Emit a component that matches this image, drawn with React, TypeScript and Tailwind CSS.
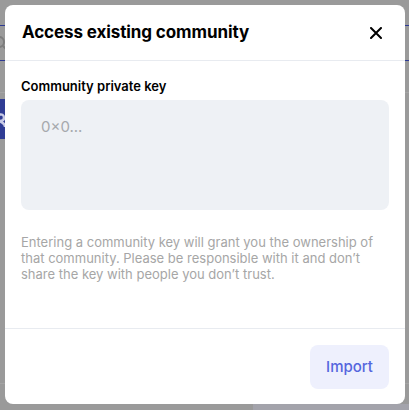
import React from "react";

function Backdrop() {
  return (
    <div className="w-full h-full flex flex-col bg-[#9a9a9a]">
      <div className="h-[25px] shrink-0" />
      <div className="h-[36px] shrink-0 border-t border-b border-[#2e3a93] flex items-center">
        <svg width="6" height="14" viewBox="0 0 6 14">
          <circle cx="-1" cy="6" r="5" fill="none" stroke="#7d7d7d" strokeWidth="2" />
          <path d="M3 10 L6 13" stroke="#7d7d7d" strokeWidth="2" />
        </svg>
      </div>
      <div className="h-[32px] shrink-0 border-b border-[#a4a4a4]" />
      <div className="pt-[6px] shrink-0">
        <div className="w-[6px] h-[40px] bg-[#2f3c94] overflow-hidden">
          <svg width="6" height="40" viewBox="0 0 6 40">
            <path d="M-2 16 Q4 14 4 19 Q4 22 -1 22 Q5 24 5 28" fill="none" stroke="#c8cbe6" strokeWidth="2.5" />
          </svg>
        </div>
      </div>
      <div className="flex-1" />
      <div className="h-[27px] shrink-0 border-t border-[#a4a4a4] flex flex-col justify-end">
        <div className="h-[6px] flex">
          <div className="w-[253px]" />
          <div className="flex-1 bg-[#a3a3ab]" />
        </div>
      </div>
    </div>
  );
}

export default function App() {
  return (
    <div className="relative w-[409px] h-[410px] overflow-hidden" style={{ fontFamily: "Inter, 'Noto Sans', sans-serif" }}>
      <Backdrop />

      {/* modal dialog over the dimmed page */}
      <div className="absolute left-[5px] top-[5px] w-[400px] h-[399px] bg-white rounded-[8px] flex flex-col">
        <div className="h-[56px] flex items-center justify-between pl-[17px] pr-[23px] border-b border-[#e8ebf0] shrink-0">
          <div className="text-[17px] font-bold text-[#000] tracking-[-0.1px]">Access existing community</div>
          <svg width="12" height="12" viewBox="0 0 12 12" className="mt-[1px]">
            <path d="M1 1 L11 11 M11 1 L1 11" stroke="#000" strokeWidth="2" strokeLinecap="round" />
          </svg>
        </div>
        <div className="flex-1 px-4 pt-4 flex flex-col">
          <div className="text-[13px] font-semibold text-[#000] leading-[18px]">Community private key</div>
          <div className="mt-[5px] h-[110px] rounded-[8px] bg-[#eef1f5] px-[20px] pt-[16px]">
            <div className="text-[15px] leading-[22px] text-[#a6a9ad]">0×0...</div>
          </div>
          <div className="mt-[24px] text-[13px] leading-[16px] text-[#a6a6a6]">
            Entering a community key will grant you the ownership of that community. Please be responsible with it and don’t share the key with people you don’t trust.
          </div>
        </div>
        <div className="h-[76px] border-t border-[#e8ebf0] shrink-0 flex justify-end items-start pt-[16px] px-4">
          <button className="w-[79px] h-[44px] rounded-[8px] bg-[#eef0fd] text-[#5566de] text-[15px] font-medium">Import</button>
        </div>
      </div>
    </div>
  );
}
